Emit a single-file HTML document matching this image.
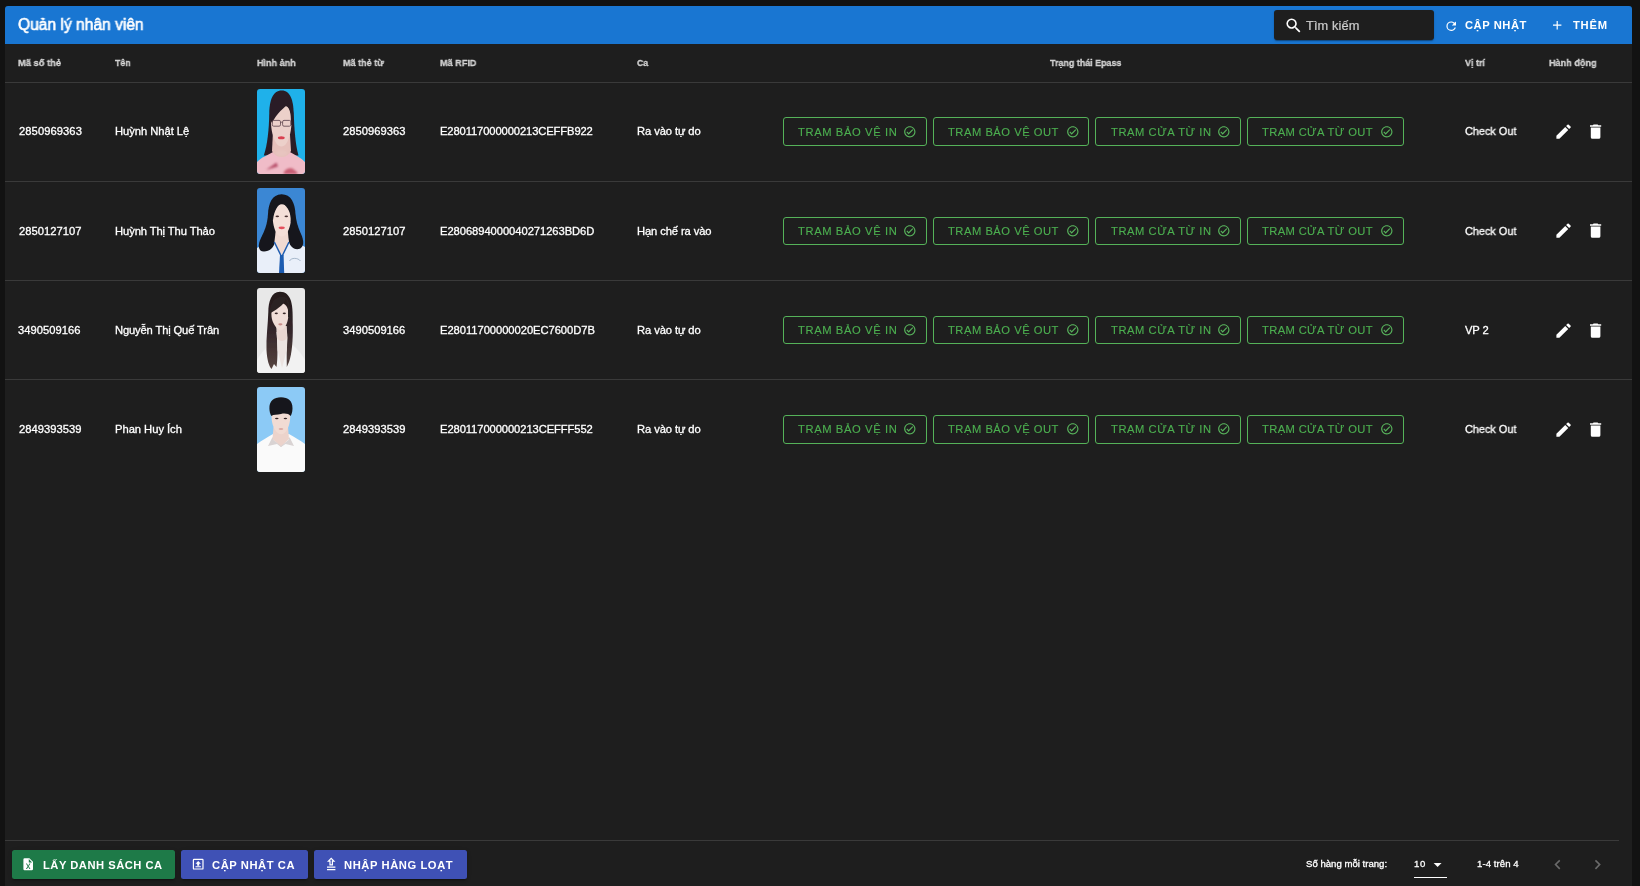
<!DOCTYPE html>
<html lang="vi"><head><meta charset="utf-8"><title>Quản lý nhân viên</title>
<style>
*{box-sizing:border-box;margin:0;padding:0}
html,body{width:1640px;height:886px;overflow:hidden;background:#121212}
body{position:relative;font-family:"Liberation Sans",sans-serif;color:#fff}
.t{position:absolute;will-change:transform;transform-origin:0 50%;white-space:nowrap;line-height:20px;display:block}
.abs{position:absolute}
.card{position:absolute;left:5px;top:6px;width:1627px;height:900px;background:#1e1e1e;border-radius:3px}
.toolbar{position:absolute;left:5px;top:6px;width:1627px;height:38px;background:#1976d2;border-radius:3px 3px 0 0}
.search{position:absolute;left:1274px;top:10px;width:160px;height:30px;background:#1e1e1e;border-radius:3px;box-shadow:0 2px 1px -1px rgba(0,0,0,.2),0 1px 1px 0 rgba(0,0,0,.14),0 1px 3px 0 rgba(0,0,0,.12)}
.hl{position:absolute;left:5px;width:1627px;height:1px;background:#3a3a3a}
.ob{position:absolute;border:1px solid #55b259;border-radius:3px}
.fb{position:absolute;top:850px;height:29px;border-radius:2.5px;box-shadow:0 3px 1px -2px rgba(0,0,0,.2),0 2px 2px 0 rgba(0,0,0,.14),0 1px 5px 0 rgba(0,0,0,.12)}
svg{position:absolute;display:block;overflow:visible}
.ph{position:absolute;left:257px;width:48px;height:85px;border-radius:3px;overflow:hidden}
.ph svg{left:0;top:0}
.g{position:absolute;left:0;top:0;width:0;height:0}
</style></head><body>
<div class="g">
<div class="card"></div>
</div>
<header class="g">
<div class="toolbar"></div>
<span class="t" id="t0" style="left:18.18px;top:15.06px;font-size:16px;color:#fff;transform:scaleX(0.9740);-webkit-text-stroke:0.6px currentColor;">Quản lý nhân viên</span>
<div class="search"></div>
<svg style="left:1283.80px;top:16.40px" width="19.2" height="19.2" viewBox="0 0 24 24"><path fill="#fff" d="M9.5,3A6.5,6.5 0 0,1 16,9.5C16,11.11 15.41,12.59 14.44,13.73L14.71,14H15.5L20.5,19L19,20.5L14,15.5V14.71L13.73,14.44C12.59,15.41 11.11,16 9.5,16A6.5,6.5 0 0,1 3,9.5A6.5,6.5 0 0,1 9.5,3M9.5,5C7,5 5,7 5,9.5C5,12 7,14 9.5,14C12,14 14,12 14,9.5C14,7 12,5 9.5,5Z"/></svg>
<span class="t" id="t1" style="left:1305.88px;top:16.16px;font-size:12.8px;color:rgba(255,255,255,.72);letter-spacing:0.104px;-webkit-text-stroke:0.2px currentColor;">Tìm kiếm</span>
<svg style="left:1444.10px;top:18.50px" width="14.4" height="14.4" viewBox="0 0 24 24"><path fill="#fff" d="M17.65,6.35C16.2,4.9 14.21,4 12,4A8,8 0 0,0 4,12A8,8 0 0,0 12,20C15.73,20 18.84,17.45 19.73,14H17.65C16.83,16.33 14.61,18 12,18A6,6 0 0,1 6,12A6,6 0 0,1 12,6C13.66,6 15.14,6.69 16.22,7.78L13,11H20V4L17.65,6.35Z"/></svg>
<span class="t" id="t2" style="left:1465.20px;top:15.12px;font-size:11.2px;color:#fff;font-weight:700;letter-spacing:0.543px;">CẬP NHẬT</span>
<svg style="left:1550.10px;top:18.30px" width="14.4" height="14.4" viewBox="0 0 24 24"><path fill="#fff" d="M19,13H13V19H11V13H5V11H11V5H13V11H19V13Z"/></svg>
<span class="t" id="t3" style="left:1572.55px;top:15.12px;font-size:11.2px;color:#fff;font-weight:700;letter-spacing:0.782px;">THÊM</span>
</header>
<div class="g thead">
<span class="t" id="t4" style="left:17.92px;top:53.10px;font-size:9.8px;color:rgba(255,255,255,.74);font-weight:700;transform:scaleX(0.9535);-webkit-text-stroke:0.3px currentColor;">Mã số thẻ</span>
<span class="t" id="t5" style="left:115.36px;top:53.10px;font-size:9.8px;color:rgba(255,255,255,.74);font-weight:700;transform:scaleX(0.8983);-webkit-text-stroke:0.3px currentColor;">Tên</span>
<span class="t" id="t6" style="left:256.67px;top:53.10px;font-size:9.8px;color:rgba(255,255,255,.74);font-weight:700;transform:scaleX(0.9230);-webkit-text-stroke:0.3px currentColor;">Hình ảnh</span>
<span class="t" id="t7" style="left:342.92px;top:53.10px;font-size:9.8px;color:rgba(255,255,255,.74);font-weight:700;transform:scaleX(0.9250);-webkit-text-stroke:0.3px currentColor;">Mã thẻ từ</span>
<span class="t" id="t8" style="left:440.17px;top:53.10px;font-size:9.8px;color:rgba(255,255,255,.74);font-weight:700;transform:scaleX(0.9296);-webkit-text-stroke:0.3px currentColor;">Mã RFID</span>
<span class="t" id="t9" style="left:637.42px;top:53.10px;font-size:9.8px;color:rgba(255,255,255,.74);font-weight:700;transform:scaleX(0.8965);-webkit-text-stroke:0.3px currentColor;">Ca</span>
<span class="t" id="t10" style="left:1050.40px;top:53.10px;font-size:9.8px;color:rgba(255,255,255,.74);font-weight:700;transform:scaleX(0.9108);-webkit-text-stroke:0.3px currentColor;">Trạng thái Epass</span>
<span class="t" id="t11" style="left:1465.48px;top:53.10px;font-size:9.8px;color:rgba(255,255,255,.74);font-weight:700;transform:scaleX(0.9147);-webkit-text-stroke:0.3px currentColor;">Vị trí</span>
<span class="t" id="t12" style="left:1549.17px;top:53.10px;font-size:9.8px;color:rgba(255,255,255,.74);font-weight:700;transform:scaleX(0.9286);-webkit-text-stroke:0.3px currentColor;">Hành động</span>
<div class="hl" style="top:82px"></div>
</div>
<div class="g row">
<span class="t" id="t13" style="left:18.61px;top:121.12px;font-size:11.2px;color:#fff;letter-spacing:0.070px;-webkit-text-stroke:0.3px currentColor;">2850969363</span>
<span class="t" id="t14" style="left:115.08px;top:121.12px;font-size:11.2px;color:#fff;letter-spacing:-0.033px;-webkit-text-stroke:0.3px currentColor;">Huỳnh Nhật Lệ</span>
<div class="ph" style="top:89px"><svg width="48" height="85" viewBox="0 0 48 85"><defs><filter id="b0" x="-20%" y="-20%" width="140%" height="140%"><feGaussianBlur stdDeviation="0.55"/></filter><filter id="c0" x="-20%" y="-20%" width="140%" height="140%"><feGaussianBlur stdDeviation="1.1"/></filter><linearGradient id="h0" x1="0" y1="0" x2="0" y2="1"><stop offset="0" stop-color="#241a1a"/><stop offset="0.5" stop-color="#33262a"/><stop offset="1" stop-color="#56443f"/></linearGradient></defs><rect width="48" height="85" fill="#1fb1ea"/>
<g filter="url(#b0)">
<path d="M24.8 1.6 C15.5 1.6 12.6 12 12.3 24 C12 40 10.5 56 6.8 66.5 L41.5 66.5 C38.5 56 37.2 40 36.8 24 C36.5 12 33.5 1.6 24.8 1.6Z" fill="#2a1d26"/>
<path d="M0 85 L0 73 C4 68.5 11 66 17 62.5 L32 62.5 C38 66 44 68.5 48 73 L48 85Z" fill="#f0bcc8"/>
<path d="M15.8 46 L33 46 L34 62 C30 70 19 70 15 62Z" fill="#e6c0bb"/>
<path d="M13.9 31 C13.9 21 17.3 16 24.3 16 C31.2 16 34.6 21 34.6 31 C34.6 41 32.5 50 29 55 C26.8 58.2 22 58.2 19.8 55 C16.2 50 13.9 41 13.9 31Z" fill="#ecd0ca"/>
<path d="M12.8 30 C12.5 15 21 7 31.5 15 C27 18.5 20 24 15 34Z" fill="#2a1d26"/>
<path d="M31 14.5 C36 19 36.5 28 35.8 36 L33.8 36 C34.3 27 33.5 21 30 16Z" fill="#2a1d26"/>
<rect x="15.3" y="31.4" width="8.2" height="5.8" rx="1.4" fill="none" stroke="#6a5058" stroke-width="0.9"/>
<rect x="25.6" y="31.4" width="8.2" height="5.8" rx="1.4" fill="none" stroke="#6a5058" stroke-width="0.9"/>
<path d="M23.5 33.2 H25.6" stroke="#6a5058" stroke-width="0.8"/>
<ellipse cx="24.3" cy="48.8" rx="3.4" ry="1.5" fill="#d9404f"/>
</g>
<g filter="url(#c0)">
<path d="M9 81 L19.5 73.5 L21 77.5 Z" fill="#b8506a"/>
<path d="M26.5 85 C27 80.5 32 78.5 35.5 79.5 L40.5 83.5 L40 85Z" fill="#c85f74"/>
<ellipse cx="24.5" cy="64" rx="6" ry="3" fill="#e9c5c0" opacity=".8"/>
</g></svg></div>
<span class="t" id="t15" style="left:343.11px;top:121.12px;font-size:11.2px;color:#fff;letter-spacing:0.041px;-webkit-text-stroke:0.3px currentColor;">2850969363</span>
<span class="t" id="t16" style="left:440.08px;top:121.12px;font-size:11.2px;color:#fff;letter-spacing:-0.107px;-webkit-text-stroke:0.3px currentColor;">E280117000000213CEFFB922</span>
<span class="t" id="t17" style="left:637.08px;top:121.12px;font-size:11.2px;color:#fff;letter-spacing:-0.090px;-webkit-text-stroke:0.3px currentColor;">Ra vào tự do</span>
<div class="ob" style="left:783px;top:117px;width:144px;height:29px"></div>
<span class="t" id="t18" style="left:798.01px;top:122.02px;font-size:11.2px;color:#4caf50;letter-spacing:0.614px;-webkit-text-stroke:0.12px currentColor;">TRẠM BẢO VỆ IN</span>
<svg style="left:902.90px;top:124.70px" width="13.6" height="13.6" viewBox="0 0 24 24"><path fill="#58b35c" d="M12 2C6.5 2 2 6.5 2 12S6.5 22 12 22 22 17.5 22 12 17.5 2 12 2M12 20C7.59 20 4 16.41 4 12S7.59 4 12 4 20 7.59 20 12 16.41 20 12 20M16.59 7.58L10 14.17L7.41 11.59L6 13L10 17L18 9L16.59 7.58Z"/></svg>
<div class="ob" style="left:933px;top:117px;width:156px;height:29px"></div>
<span class="t" id="t19" style="left:948.01px;top:122.02px;font-size:11.2px;color:#4caf50;letter-spacing:0.516px;-webkit-text-stroke:0.12px currentColor;">TRẠM BẢO VỆ OUT</span>
<svg style="left:1066.00px;top:124.70px" width="13.6" height="13.6" viewBox="0 0 24 24"><path fill="#58b35c" d="M12 2C6.5 2 2 6.5 2 12S6.5 22 12 22 22 17.5 22 12 17.5 2 12 2M12 20C7.59 20 4 16.41 4 12S7.59 4 12 4 20 7.59 20 12 16.41 20 12 20M16.59 7.58L10 14.17L7.41 11.59L6 13L10 17L18 9L16.59 7.58Z"/></svg>
<div class="ob" style="left:1095px;top:117px;width:146px;height:29px"></div>
<span class="t" id="t20" style="left:1110.51px;top:122.02px;font-size:11.2px;color:#4caf50;letter-spacing:0.551px;-webkit-text-stroke:0.12px currentColor;">TRẠM CỬA TỪ IN</span>
<svg style="left:1217.00px;top:124.70px" width="13.6" height="13.6" viewBox="0 0 24 24"><path fill="#58b35c" d="M12 2C6.5 2 2 6.5 2 12S6.5 22 12 22 22 17.5 22 12 17.5 2 12 2M12 20C7.59 20 4 16.41 4 12S7.59 4 12 4 20 7.59 20 12 16.41 20 12 20M16.59 7.58L10 14.17L7.41 11.59L6 13L10 17L18 9L16.59 7.58Z"/></svg>
<div class="ob" style="left:1247px;top:117px;width:157px;height:29px"></div>
<span class="t" id="t21" style="left:1262.09px;top:122.02px;font-size:11.2px;color:#4caf50;letter-spacing:0.371px;-webkit-text-stroke:0.12px currentColor;">TRẠM CỬA TỪ OUT</span>
<svg style="left:1379.70px;top:124.70px" width="13.6" height="13.6" viewBox="0 0 24 24"><path fill="#58b35c" d="M12 2C6.5 2 2 6.5 2 12S6.5 22 12 22 22 17.5 22 12 17.5 2 12 2M12 20C7.59 20 4 16.41 4 12S7.59 4 12 4 20 7.59 20 12 16.41 20 12 20M16.59 7.58L10 14.17L7.41 11.59L6 13L10 17L18 9L16.59 7.58Z"/></svg>
<span class="t" id="t22" style="left:1464.67px;top:121.12px;font-size:11.2px;color:#fff;transform:scaleX(0.9734);-webkit-text-stroke:0.3px currentColor;">Check Out</span>
<svg style="left:1553.90px;top:122.10px" width="19.2" height="19.2" viewBox="0 0 24 24"><path fill="#fff" d="M20.71,7.04C21.1,6.65 21.1,6 20.71,5.63L18.37,3.29C18,2.9 17.35,2.9 16.96,3.29L15.12,5.12L18.87,8.87M3,17.25V21H6.75L17.81,9.93L14.06,6.18L3,17.25Z"/></svg>
<svg style="left:1586.10px;top:122.10px" width="19.2" height="19.2" viewBox="0 0 24 24"><path fill="#fff" d="M19,4H15.5L14.5,3H9.5L8.5,4H5V6H19M6,19A2,2 0 0,0 8,21H16A2,2 0 0,0 18,19V7H6V19Z"/></svg>
<div class="hl" style="top:181px"></div>
</div>
<div class="g row">
<span class="t" id="t23" style="left:18.61px;top:220.52px;font-size:11.2px;color:#fff;letter-spacing:0.026px;-webkit-text-stroke:0.3px currentColor;">2850127107</span>
<span class="t" id="t24" style="left:115.08px;top:220.52px;font-size:11.2px;color:#fff;letter-spacing:-0.087px;-webkit-text-stroke:0.3px currentColor;">Huỳnh Thị Thu Thảo</span>
<div class="ph" style="top:188px"><svg width="48" height="85" viewBox="0 0 48 85"><defs><filter id="b1" x="-20%" y="-20%" width="140%" height="140%"><feGaussianBlur stdDeviation="0.55"/></filter><filter id="c1" x="-20%" y="-20%" width="140%" height="140%"><feGaussianBlur stdDeviation="1.1"/></filter><linearGradient id="h1" x1="0" y1="0" x2="0" y2="1"><stop offset="0" stop-color="#241a1a"/><stop offset="0.5" stop-color="#33262a"/><stop offset="1" stop-color="#56443f"/></linearGradient></defs><rect width="48" height="85" fill="#3b87d4"/>
<g filter="url(#b1)">
<path d="M0 85 L0 60 C4 57 11 55 16 52 L33 52 C38 55 44 56 48 59 L48 85Z" fill="#e9eff9"/>
<path d="M24.6 6.3 C15 6.3 11.5 16 11 26 C10.5 36 7.5 43 4 50 C0.5 57 1 63.5 7 63.5 C12.5 63.5 17 60 18.5 52 L31 50 C32 58 36.5 62 42 61 C47.5 59.5 47 52 44 46 C40.5 38.5 39 32 38.5 26 C38 15 34 6.3 24.6 6.3Z" fill="#14151c"/>
<path d="M18.8 42 L30.7 42 L32 55 L24.7 67 L17.3 55Z" fill="#f0dad2"/>
<path d="M15.8 30 C15.8 21 19 16.3 24.8 16.3 C30.6 16.3 34 21 34 30 C34 37 31.5 43.5 28.5 46.8 C26.5 49 23 49 21 46.8 C18 43.5 15.8 37 15.8 30Z" fill="#f4dfd8"/>
<path d="M13.8 31 C12.8 18 19 13 25 15 C20.5 17.5 17.3 22 16 32Z" fill="#14151c"/>
<path d="M25 15 C32 14.5 36.8 22 35.2 34 L33.8 34 C34 25 31.5 19 25 15Z" fill="#14151c"/>
<ellipse cx="20.3" cy="28.3" rx="1.8" ry="0.9" fill="#4a3030"/>
<ellipse cx="29.3" cy="28.3" rx="1.8" ry="0.9" fill="#4a3030"/>
<ellipse cx="24.7" cy="39.8" rx="3.1" ry="1.4" fill="#e4505c"/>
<path d="M17.3 54 L24.2 68 M32 54 L25.2 68" stroke="#1f5cb0" stroke-width="1.5" fill="none"/>
<path d="M23 67 L26.6 67 L27.2 85 L22 85Z" fill="#1f5cb0"/>
<path d="M32.5 73 C34 69.5 41 69.5 43.5 73" stroke="#8aa0b8" stroke-width="0.7" fill="none"/>
</g></svg></div>
<span class="t" id="t25" style="left:343.11px;top:220.52px;font-size:11.2px;color:#fff;letter-spacing:0.031px;-webkit-text-stroke:0.3px currentColor;">2850127107</span>
<span class="t" id="t26" style="left:440.08px;top:220.52px;font-size:11.2px;color:#fff;letter-spacing:-0.051px;-webkit-text-stroke:0.3px currentColor;">E2806894000040271263BD6D</span>
<span class="t" id="t27" style="left:637.08px;top:220.52px;font-size:11.2px;color:#fff;letter-spacing:-0.105px;-webkit-text-stroke:0.3px currentColor;">Hạn chế ra vào</span>
<div class="ob" style="left:783px;top:217px;width:144px;height:28px"></div>
<span class="t" id="t28" style="left:798.01px;top:221.42px;font-size:11.2px;color:#4caf50;letter-spacing:0.614px;-webkit-text-stroke:0.12px currentColor;">TRẠM BẢO VỆ IN</span>
<svg style="left:902.90px;top:223.90px" width="13.6" height="13.6" viewBox="0 0 24 24"><path fill="#58b35c" d="M12 2C6.5 2 2 6.5 2 12S6.5 22 12 22 22 17.5 22 12 17.5 2 12 2M12 20C7.59 20 4 16.41 4 12S7.59 4 12 4 20 7.59 20 12 16.41 20 12 20M16.59 7.58L10 14.17L7.41 11.59L6 13L10 17L18 9L16.59 7.58Z"/></svg>
<div class="ob" style="left:933px;top:217px;width:156px;height:28px"></div>
<span class="t" id="t29" style="left:948.01px;top:221.42px;font-size:11.2px;color:#4caf50;letter-spacing:0.516px;-webkit-text-stroke:0.12px currentColor;">TRẠM BẢO VỆ OUT</span>
<svg style="left:1066.00px;top:223.90px" width="13.6" height="13.6" viewBox="0 0 24 24"><path fill="#58b35c" d="M12 2C6.5 2 2 6.5 2 12S6.5 22 12 22 22 17.5 22 12 17.5 2 12 2M12 20C7.59 20 4 16.41 4 12S7.59 4 12 4 20 7.59 20 12 16.41 20 12 20M16.59 7.58L10 14.17L7.41 11.59L6 13L10 17L18 9L16.59 7.58Z"/></svg>
<div class="ob" style="left:1095px;top:217px;width:146px;height:28px"></div>
<span class="t" id="t30" style="left:1110.51px;top:221.42px;font-size:11.2px;color:#4caf50;letter-spacing:0.551px;-webkit-text-stroke:0.12px currentColor;">TRẠM CỬA TỪ IN</span>
<svg style="left:1217.00px;top:223.90px" width="13.6" height="13.6" viewBox="0 0 24 24"><path fill="#58b35c" d="M12 2C6.5 2 2 6.5 2 12S6.5 22 12 22 22 17.5 22 12 17.5 2 12 2M12 20C7.59 20 4 16.41 4 12S7.59 4 12 4 20 7.59 20 12 16.41 20 12 20M16.59 7.58L10 14.17L7.41 11.59L6 13L10 17L18 9L16.59 7.58Z"/></svg>
<div class="ob" style="left:1247px;top:217px;width:157px;height:28px"></div>
<span class="t" id="t31" style="left:1262.09px;top:221.42px;font-size:11.2px;color:#4caf50;letter-spacing:0.371px;-webkit-text-stroke:0.12px currentColor;">TRẠM CỬA TỪ OUT</span>
<svg style="left:1379.70px;top:223.90px" width="13.6" height="13.6" viewBox="0 0 24 24"><path fill="#58b35c" d="M12 2C6.5 2 2 6.5 2 12S6.5 22 12 22 22 17.5 22 12 17.5 2 12 2M12 20C7.59 20 4 16.41 4 12S7.59 4 12 4 20 7.59 20 12 16.41 20 12 20M16.59 7.58L10 14.17L7.41 11.59L6 13L10 17L18 9L16.59 7.58Z"/></svg>
<span class="t" id="t32" style="left:1464.67px;top:220.52px;font-size:11.2px;color:#fff;transform:scaleX(0.9734);-webkit-text-stroke:0.3px currentColor;">Check Out</span>
<svg style="left:1553.90px;top:221.30px" width="19.2" height="19.2" viewBox="0 0 24 24"><path fill="#fff" d="M20.71,7.04C21.1,6.65 21.1,6 20.71,5.63L18.37,3.29C18,2.9 17.35,2.9 16.96,3.29L15.12,5.12L18.87,8.87M3,17.25V21H6.75L17.81,9.93L14.06,6.18L3,17.25Z"/></svg>
<svg style="left:1586.10px;top:221.30px" width="19.2" height="19.2" viewBox="0 0 24 24"><path fill="#fff" d="M19,4H15.5L14.5,3H9.5L8.5,4H5V6H19M6,19A2,2 0 0,0 8,21H16A2,2 0 0,0 18,19V7H6V19Z"/></svg>
<div class="hl" style="top:280px"></div>
</div>
<div class="g row">
<span class="t" id="t33" style="left:18.35px;top:319.62px;font-size:11.2px;color:#fff;letter-spacing:0.035px;-webkit-text-stroke:0.3px currentColor;">3490509166</span>
<span class="t" id="t34" style="left:115.08px;top:319.62px;font-size:11.2px;color:#fff;letter-spacing:-0.143px;-webkit-text-stroke:0.3px currentColor;">Nguyễn Thị Quế Trân</span>
<div class="ph" style="top:288px"><svg width="48" height="85" viewBox="0 0 48 85"><defs><filter id="b2" x="-20%" y="-20%" width="140%" height="140%"><feGaussianBlur stdDeviation="0.55"/></filter><filter id="c2" x="-20%" y="-20%" width="140%" height="140%"><feGaussianBlur stdDeviation="1.1"/></filter><linearGradient id="h2" x1="0" y1="0" x2="0" y2="1"><stop offset="0" stop-color="#241a1a"/><stop offset="0.5" stop-color="#33262a"/><stop offset="1" stop-color="#56443f"/></linearGradient></defs><rect width="48" height="85" fill="#e8e8e8"/>
<g filter="url(#b2)">
<path d="M0 85 L0 72 C5 63 12 57 18 52 L30 52 C36 57 43 63 48 72 L48 85Z" fill="#f2f2f2"/>
<path d="M23 3.8 C14 4 11.5 14 11.3 24 C11 36 9 50 9.5 62 C10 72 12 78 14.5 81 L17 76 L19.5 79 C21 70 20.5 56 19.5 44 L30 44 C30 54 29.5 66 29.8 79 L32 74 C35 66 36 52 35.8 38 C35.6 28 36 20 34 13 C32 7 28.5 3.8 23 3.8Z" fill="url(#h2)"/>
<path d="M19.5 38 L29.5 38 L30.5 50 L29.8 62 L25 80 L20.5 62Z" fill="#ebe3e0"/>
<path d="M19.5 38 L29.5 38 L30 50 C27.5 54 22.5 54 20 50Z" fill="#e8d6d1"/>
<path d="M14.4 26 C14.4 19 17.3 15 23 15 C28.7 15 31.4 19 31.4 26 C31.4 33 29 38.5 26.3 41 C24.6 42.6 22.4 42.6 20.8 41 C17.3 37.5 14.4 33 14.4 26Z" fill="#f0ddd7"/>
<path d="M12.5 27 C12 13 20 6 30 9.5 C28 15 22 20.5 13.5 25Z" fill="#2b2020"/>
<path d="M29 9 C33 12 33.8 20 33 29 L31 29 C31.3 20 31 15 28 11Z" fill="#2b2020"/>
<ellipse cx="19.3" cy="25.3" rx="1.6" ry="0.9" fill="#3a2a2a"/>
<ellipse cx="27.3" cy="25.3" rx="1.6" ry="0.9" fill="#3a2a2a"/>
<ellipse cx="23.4" cy="36.3" rx="2.1" ry="1.1" fill="#c98d8a"/>
</g></svg></div>
<span class="t" id="t35" style="left:342.85px;top:319.62px;font-size:11.2px;color:#fff;letter-spacing:0.008px;-webkit-text-stroke:0.3px currentColor;">3490509166</span>
<span class="t" id="t36" style="left:440.08px;top:319.62px;font-size:11.2px;color:#fff;letter-spacing:-0.045px;-webkit-text-stroke:0.3px currentColor;">E28011700000020EC7600D7B</span>
<span class="t" id="t37" style="left:637.08px;top:319.62px;font-size:11.2px;color:#fff;letter-spacing:-0.090px;-webkit-text-stroke:0.3px currentColor;">Ra vào tự do</span>
<div class="ob" style="left:783px;top:316px;width:144px;height:28px"></div>
<span class="t" id="t38" style="left:798.01px;top:319.62px;font-size:11.2px;color:#4caf50;letter-spacing:0.614px;-webkit-text-stroke:0.12px currentColor;">TRẠM BẢO VỆ IN</span>
<svg style="left:902.90px;top:323.10px" width="13.6" height="13.6" viewBox="0 0 24 24"><path fill="#58b35c" d="M12 2C6.5 2 2 6.5 2 12S6.5 22 12 22 22 17.5 22 12 17.5 2 12 2M12 20C7.59 20 4 16.41 4 12S7.59 4 12 4 20 7.59 20 12 16.41 20 12 20M16.59 7.58L10 14.17L7.41 11.59L6 13L10 17L18 9L16.59 7.58Z"/></svg>
<div class="ob" style="left:933px;top:316px;width:156px;height:28px"></div>
<span class="t" id="t39" style="left:948.01px;top:319.62px;font-size:11.2px;color:#4caf50;letter-spacing:0.516px;-webkit-text-stroke:0.12px currentColor;">TRẠM BẢO VỆ OUT</span>
<svg style="left:1066.00px;top:323.10px" width="13.6" height="13.6" viewBox="0 0 24 24"><path fill="#58b35c" d="M12 2C6.5 2 2 6.5 2 12S6.5 22 12 22 22 17.5 22 12 17.5 2 12 2M12 20C7.59 20 4 16.41 4 12S7.59 4 12 4 20 7.59 20 12 16.41 20 12 20M16.59 7.58L10 14.17L7.41 11.59L6 13L10 17L18 9L16.59 7.58Z"/></svg>
<div class="ob" style="left:1095px;top:316px;width:146px;height:28px"></div>
<span class="t" id="t40" style="left:1110.51px;top:319.62px;font-size:11.2px;color:#4caf50;letter-spacing:0.551px;-webkit-text-stroke:0.12px currentColor;">TRẠM CỬA TỪ IN</span>
<svg style="left:1217.00px;top:323.10px" width="13.6" height="13.6" viewBox="0 0 24 24"><path fill="#58b35c" d="M12 2C6.5 2 2 6.5 2 12S6.5 22 12 22 22 17.5 22 12 17.5 2 12 2M12 20C7.59 20 4 16.41 4 12S7.59 4 12 4 20 7.59 20 12 16.41 20 12 20M16.59 7.58L10 14.17L7.41 11.59L6 13L10 17L18 9L16.59 7.58Z"/></svg>
<div class="ob" style="left:1247px;top:316px;width:157px;height:28px"></div>
<span class="t" id="t41" style="left:1262.09px;top:319.62px;font-size:11.2px;color:#4caf50;letter-spacing:0.371px;-webkit-text-stroke:0.12px currentColor;">TRẠM CỬA TỪ OUT</span>
<svg style="left:1379.70px;top:323.10px" width="13.6" height="13.6" viewBox="0 0 24 24"><path fill="#58b35c" d="M12 2C6.5 2 2 6.5 2 12S6.5 22 12 22 22 17.5 22 12 17.5 2 12 2M12 20C7.59 20 4 16.41 4 12S7.59 4 12 4 20 7.59 20 12 16.41 20 12 20M16.59 7.58L10 14.17L7.41 11.59L6 13L10 17L18 9L16.59 7.58Z"/></svg>
<span class="t" id="t42" style="left:1464.67px;top:319.62px;font-size:11.2px;color:#fff;letter-spacing:-0.144px;-webkit-text-stroke:0.3px currentColor;">VP 2</span>
<svg style="left:1553.90px;top:320.50px" width="19.2" height="19.2" viewBox="0 0 24 24"><path fill="#fff" d="M20.71,7.04C21.1,6.65 21.1,6 20.71,5.63L18.37,3.29C18,2.9 17.35,2.9 16.96,3.29L15.12,5.12L18.87,8.87M3,17.25V21H6.75L17.81,9.93L14.06,6.18L3,17.25Z"/></svg>
<svg style="left:1586.10px;top:320.50px" width="19.2" height="19.2" viewBox="0 0 24 24"><path fill="#fff" d="M19,4H15.5L14.5,3H9.5L8.5,4H5V6H19M6,19A2,2 0 0,0 8,21H16A2,2 0 0,0 18,19V7H6V19Z"/></svg>
<div class="hl" style="top:379px"></div>
</div>
<div class="g row">
<span class="t" id="t43" style="left:18.61px;top:418.92px;font-size:11.2px;color:#fff;letter-spacing:0.032px;-webkit-text-stroke:0.3px currentColor;">2849393539</span>
<span class="t" id="t44" style="left:115.08px;top:418.92px;font-size:11.2px;color:#fff;letter-spacing:-0.023px;-webkit-text-stroke:0.3px currentColor;">Phan Huy Ích</span>
<div class="ph" style="top:387px"><svg width="48" height="85" viewBox="0 0 48 85"><defs><filter id="b3" x="-20%" y="-20%" width="140%" height="140%"><feGaussianBlur stdDeviation="0.55"/></filter><filter id="c3" x="-20%" y="-20%" width="140%" height="140%"><feGaussianBlur stdDeviation="1.1"/></filter><linearGradient id="h3" x1="0" y1="0" x2="0" y2="1"><stop offset="0" stop-color="#241a1a"/><stop offset="0.5" stop-color="#33262a"/><stop offset="1" stop-color="#56443f"/></linearGradient></defs><rect width="48" height="85" fill="#8ccaf6"/>
<g filter="url(#b3)">
<path d="M0 85 L0 57 C5 53 11 50 16 47 L32 47 C37 50 43 53 48 57 L48 85Z" fill="#fafafa"/>
<path d="M16.5 40 L31 40 L32 52 L24 60 L15.5 52Z" fill="#ecd3cb"/>
<path d="M14.6 30 C14.6 22 18 18 24 18 C30 18 33.2 22 33.2 30 C33.2 38 30 44 27.2 46.3 C25.5 47.6 22.8 47.6 21.2 46.3 C18 44 14.6 38 14.6 30Z" fill="#f1dbd3"/>
<path d="M12.4 21.5 C12.2 13.5 17 10.2 24 10.2 C31 10.2 35.7 13.5 35.5 21.5 C35.4 25 34.6 27.5 33.6 29 C32 26.8 28 26 24 27 C20 28 16.5 27.2 14.4 29 C13.2 27.5 12.5 24.5 12.4 21.5Z" fill="#17171b"/>
<ellipse cx="19.8" cy="31.5" rx="1.8" ry="0.8" fill="#3a2c2c"/>
<ellipse cx="28.4" cy="31.5" rx="1.8" ry="0.8" fill="#3a2c2c"/>
<ellipse cx="24" cy="42" rx="2.4" ry="0.8" fill="#d39a94"/>
<path d="M15.5 50 L11 59 L20 57 L24 60 L28.5 57 L37 59 L32.5 50 L31.5 53 L24 59 L16.5 53Z" fill="#d9d3d3"/>
</g></svg></div>
<span class="t" id="t45" style="left:343.11px;top:418.92px;font-size:11.2px;color:#fff;letter-spacing:0.037px;-webkit-text-stroke:0.3px currentColor;">2849393539</span>
<span class="t" id="t46" style="left:440.08px;top:418.92px;font-size:11.2px;color:#fff;letter-spacing:-0.080px;-webkit-text-stroke:0.3px currentColor;">E280117000000213CEFFF552</span>
<span class="t" id="t47" style="left:637.08px;top:418.92px;font-size:11.2px;color:#fff;letter-spacing:-0.090px;-webkit-text-stroke:0.3px currentColor;">Ra vào tự do</span>
<div class="ob" style="left:783px;top:415px;width:144px;height:29px"></div>
<span class="t" id="t48" style="left:798.01px;top:418.92px;font-size:11.2px;color:#4caf50;letter-spacing:0.614px;-webkit-text-stroke:0.12px currentColor;">TRẠM BẢO VỆ IN</span>
<svg style="left:902.90px;top:422.30px" width="13.6" height="13.6" viewBox="0 0 24 24"><path fill="#58b35c" d="M12 2C6.5 2 2 6.5 2 12S6.5 22 12 22 22 17.5 22 12 17.5 2 12 2M12 20C7.59 20 4 16.41 4 12S7.59 4 12 4 20 7.59 20 12 16.41 20 12 20M16.59 7.58L10 14.17L7.41 11.59L6 13L10 17L18 9L16.59 7.58Z"/></svg>
<div class="ob" style="left:933px;top:415px;width:156px;height:29px"></div>
<span class="t" id="t49" style="left:948.01px;top:418.92px;font-size:11.2px;color:#4caf50;letter-spacing:0.516px;-webkit-text-stroke:0.12px currentColor;">TRẠM BẢO VỆ OUT</span>
<svg style="left:1066.00px;top:422.30px" width="13.6" height="13.6" viewBox="0 0 24 24"><path fill="#58b35c" d="M12 2C6.5 2 2 6.5 2 12S6.5 22 12 22 22 17.5 22 12 17.5 2 12 2M12 20C7.59 20 4 16.41 4 12S7.59 4 12 4 20 7.59 20 12 16.41 20 12 20M16.59 7.58L10 14.17L7.41 11.59L6 13L10 17L18 9L16.59 7.58Z"/></svg>
<div class="ob" style="left:1095px;top:415px;width:146px;height:29px"></div>
<span class="t" id="t50" style="left:1110.51px;top:418.92px;font-size:11.2px;color:#4caf50;letter-spacing:0.551px;-webkit-text-stroke:0.12px currentColor;">TRẠM CỬA TỪ IN</span>
<svg style="left:1217.00px;top:422.30px" width="13.6" height="13.6" viewBox="0 0 24 24"><path fill="#58b35c" d="M12 2C6.5 2 2 6.5 2 12S6.5 22 12 22 22 17.5 22 12 17.5 2 12 2M12 20C7.59 20 4 16.41 4 12S7.59 4 12 4 20 7.59 20 12 16.41 20 12 20M16.59 7.58L10 14.17L7.41 11.59L6 13L10 17L18 9L16.59 7.58Z"/></svg>
<div class="ob" style="left:1247px;top:415px;width:157px;height:29px"></div>
<span class="t" id="t51" style="left:1262.09px;top:418.92px;font-size:11.2px;color:#4caf50;letter-spacing:0.371px;-webkit-text-stroke:0.12px currentColor;">TRẠM CỬA TỪ OUT</span>
<svg style="left:1379.70px;top:422.30px" width="13.6" height="13.6" viewBox="0 0 24 24"><path fill="#58b35c" d="M12 2C6.5 2 2 6.5 2 12S6.5 22 12 22 22 17.5 22 12 17.5 2 12 2M12 20C7.59 20 4 16.41 4 12S7.59 4 12 4 20 7.59 20 12 16.41 20 12 20M16.59 7.58L10 14.17L7.41 11.59L6 13L10 17L18 9L16.59 7.58Z"/></svg>
<span class="t" id="t52" style="left:1464.67px;top:418.92px;font-size:11.2px;color:#fff;transform:scaleX(0.9734);-webkit-text-stroke:0.3px currentColor;">Check Out</span>
<svg style="left:1553.90px;top:419.70px" width="19.2" height="19.2" viewBox="0 0 24 24"><path fill="#fff" d="M20.71,7.04C21.1,6.65 21.1,6 20.71,5.63L18.37,3.29C18,2.9 17.35,2.9 16.96,3.29L15.12,5.12L18.87,8.87M3,17.25V21H6.75L17.81,9.93L14.06,6.18L3,17.25Z"/></svg>
<svg style="left:1586.10px;top:419.70px" width="19.2" height="19.2" viewBox="0 0 24 24"><path fill="#fff" d="M19,4H15.5L14.5,3H9.5L8.5,4H5V6H19M6,19A2,2 0 0,0 8,21H16A2,2 0 0,0 18,19V7H6V19Z"/></svg>
</div>
<footer class="g">
<div class="hl" style="top:840px;width:1614px"></div>
<div class="fb" style="left:12px;width:163px;background:#1e7a48"></div>
<svg style="left:21.00px;top:857.20px" width="14.4" height="14.4" viewBox="0 0 24 24"><path fill="#fff" d="M14,2H6A2,2 0 0,0 4,4V20A2,2 0 0,0 6,22H18A2,2 0 0,0 20,20V8L14,2M15.8,20H14L12,16.6L10,20H8.2L11.1,15.5L8.2,11H10L12,14.4L14,11H15.8L12.9,15.5L15.8,20M13,9V3.5L18.5,9H13Z"/></svg>
<span class="t" id="t53" style="left:42.66px;top:854.92px;font-size:11.2px;color:#fff;font-weight:700;letter-spacing:0.500px;">LẤY DANH SÁCH CA</span>
<div class="fb" style="left:181px;width:127px;background:#3f51b5"></div>
<svg style="left:191.00px;top:857.40px" width="14.4" height="14.4" viewBox="0 0 24 24"><path fill="#fff" d="M19,3H5A2,2 0 0,0 3,5V19A2,2 0 0,0 5,21H19A2,2 0 0,0 21,19V5A2,2 0 0,0 19,3M19,19H5V5H19V19M7.5,15.5H16.5V17.2H7.5V15.5M10.3,14.5V11.3H7.5L12,6.5L16.5,11.3H13.7V14.5H10.3Z"/></svg>
<span class="t" id="t54" style="left:211.82px;top:854.92px;font-size:11.2px;color:#fff;font-weight:700;letter-spacing:0.560px;">CẬP NHẬT CA</span>
<div class="fb" style="left:314px;width:153px;background:#3f51b5"></div>
<svg style="left:324.10px;top:857.20px" width="14.4" height="14.4" viewBox="0 0 24 24"><path fill="#fff" d="M9,14V8H5L12,1L19,8H15V14H9M11,12H13V6H14.17L12,3.83L9.83,6H11V12M5,18V16H19V18H5M19,20V22H5V20H19Z"/></svg>
<span class="t" id="t55" style="left:344.20px;top:854.92px;font-size:11.2px;color:#fff;font-weight:700;letter-spacing:0.579px;">NHẬP HÀNG LOẠT</span>
<span class="t" id="t56" style="left:1306.44px;top:854.17px;font-size:9.6px;color:#fff;letter-spacing:-0.001px;-webkit-text-stroke:0.3px currentColor;">Số hàng mỗi trang:</span>
<span class="t" id="t57" style="left:1413.73px;top:854.17px;font-size:9.6px;color:#fff;letter-spacing:0.659px;-webkit-text-stroke:0.3px currentColor;">10</span>
<svg style="left:1428.30px;top:854.70px" width="19.2" height="19.2" viewBox="0 0 24 24"><path fill="#fff" d="M7,10L12,15L17,10H7Z"/></svg>
<div class="abs" style="left:1414px;top:877px;width:33px;height:1px;background:#fff"></div>
<span class="t" id="t58" style="left:1477.23px;top:854.17px;font-size:9.6px;color:#fff;letter-spacing:0.058px;-webkit-text-stroke:0.3px currentColor;">1-4 trên 4</span>
<svg style="left:1547.80px;top:855.40px" width="19.2" height="19.2" viewBox="0 0 24 24"><path fill="#6a6a6a" d="M15.41,16.58L10.83,12L15.41,7.41L14,6L8,12L14,18L15.41,16.58Z"/></svg>
<svg style="left:1588.00px;top:855.40px" width="19.2" height="19.2" viewBox="0 0 24 24"><path fill="#6a6a6a" d="M8.59,16.58L13.17,12L8.59,7.41L10,6L16,12L10,18L8.59,16.58Z"/></svg>
</footer>
</body></html>
